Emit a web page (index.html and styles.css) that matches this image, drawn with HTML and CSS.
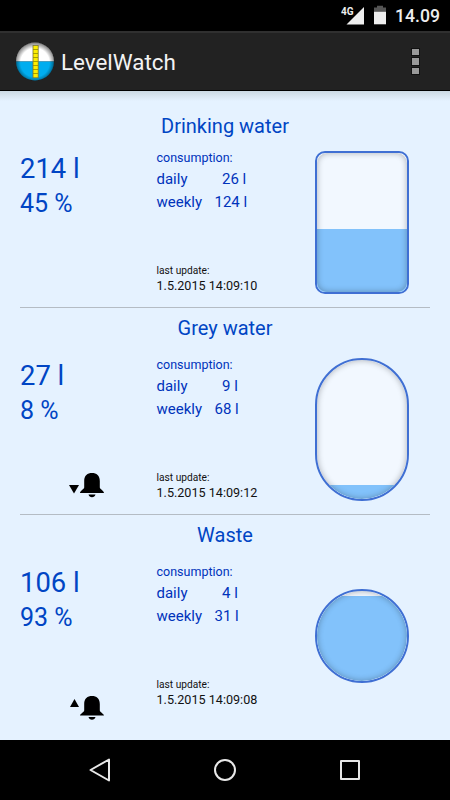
FILE: index.html
```
<!DOCTYPE html>
<html lang="en">
<head>
	<meta charset="UTF-8">
	<title>LevelWatch</title>
	<link rel="stylesheet" href="styles.css">
</head>
<body>
	<div id="statusbar">
		<svg class="signal" width="24" height="20" viewBox="0 0 24 20">
			<text x="0" y="10">4G</text>
			<path d="M23 2V19.500H5.500Z"/>
		</svg>
		<svg class="battery" width="12" height="20" viewBox="0 0 12 20">
			<path class="empty" d="M3 .8h6v1.600h3V7H0V2.400h3z"/>
			<path d="M0 6.800h12V19.300H0z"/>
		</svg>
		<span class="clock">14.09</span>
	</div>
	<div id="header">
		<svg class="logo" width="40" height="40" viewBox="0 0 40 40">
			<defs>
				<radialGradient id="shade" cx=".5" cy=".53" r=".52">
					<stop offset=".72" stop-color="#000" stop-opacity="0"/>
					<stop offset="1" stop-color="#000" stop-opacity=".5"/>
				</radialGradient>
			</defs>
			<path fill="#fff" d="M1 19.500a19 19 0 0 1 38 0z"/>
			<path fill="#00adef" d="M1 19.500a19 19 0 0 0 38 0z"/>
			<circle cx="20" cy="19.500" r="19.200" fill="url(#shade)"/>
			<rect x="18" y="3.400" width="5.200" height="32.400" fill="#fdee00" stroke="#77733a" stroke-width=".8"/>
			<path stroke="#918a00" stroke-width=".8" d="M18 7.500h5M18 11.500h5M18 15.500h5M18 19.500h5M18 23.500h5M18 27.500h5M18 31.500h5"/>
		</svg>
		<h1>LevelWatch</h1>
		<div class="menu">
			<i></i>
			<i></i>
			<i></i>
		</div>
	</div>
	<div id="content">
		<div class="section first">
			<h2>Drinking water</h2>
			<div class="row">
				<div class="level">
					<div class="litres">214 l</div>
					<div class="percent">45 %</div>
				</div>
				<div class="info">
					<div class="label">consumption:</div>
					<div class="daily"><span>daily</span>26 l</div>
					<div class="weekly"><span>weekly</span>124 l</div>
					<div class="update">last update:</div>
					<div class="date">1.5.2015 14:09:10</div>
				</div>
				<div class="tank">
					<div class="water" style="height: 45%"></div>
				</div>
			</div>
		</div>
		<div class="section">
			<h2>Grey water</h2>
			<div class="row">
				<div class="level">
					<div class="litres">27 l</div>
					<div class="percent">8 %</div>
					<svg class="alarm low" width="36" height="26" viewBox="0 0 36 26">
						<path d="M0 13h10L5 21.500z"/>
						<path d="M15.200 9C15.200 3.500 18.500 1 23 1s7.800 2.500 7.800 8v6.500c0 1.500 4.200 3.500 4.200 5.500H11c0-2 4.200-4 4.200-5.500zM19.500 22.500h7c-.5 1.800-1.800 2.700-3.500 2.700s-3-.9-3.500-2.700z"/>
					</svg>
				</div>
				<div class="info">
					<div class="label">consumption:</div>
					<div class="daily"><span>daily</span>9 l</div>
					<div class="weekly"><span>weekly</span>68 l</div>
					<div class="update">last update:</div>
					<div class="date">1.5.2015 14:09:12</div>
				</div>
				<div class="tank oval">
					<div class="water" style="height: 10%"></div>
				</div>
			</div>
		</div>
		<div class="section last">
			<h2>Waste</h2>
			<div class="row">
				<div class="level">
					<div class="litres">106 l</div>
					<div class="percent">93 %</div>
					<svg class="alarm high" width="36" height="26" viewBox="0 0 36 26">
						<path d="M1 12h9L5.500 4z"/>
						<path d="M15.200 9C15.200 3.500 18.500 1 23 1s7.800 2.500 7.800 8v6.500c0 1.500 4.200 3.500 4.200 5H11c0-1.500 4.200-3.500 4.200-5zM19.500 22h7c-.5 1.800-1.800 2.700-3.500 2.700s-3-.9-3.500-2.700z"/>
					</svg>
				</div>
				<div class="info">
					<div class="label">consumption:</div>
					<div class="daily"><span>daily</span>4 l</div>
					<div class="weekly"><span>weekly</span>31 l</div>
					<div class="update">last update:</div>
					<div class="date">1.5.2015 14:09:08</div>
				</div>
				<div class="tank round">
					<div class="water" style="height: 95%"></div>
				</div>
			</div>
		</div>
	</div>
	<div id="navbar">
		<svg width="24" height="24" viewBox="0 0 24 24"><path d="M21 1.500v21L2.500 12z"/></svg>
		<svg width="24" height="24" viewBox="0 0 24 24"><circle cx="12" cy="12" r="10"/></svg>
		<svg width="24" height="24" viewBox="0 0 24 24"><path d="M3 3h18v18H3z"/></svg>
	</div>
</body>
</html>
```
FILE: styles.css
```
*{
	margin: 0;
	padding: 0;
	box-sizing: border-box;
}
body{
	width: 450px;
	height: 800px;
	display: flex;
	flex-direction: column;
	overflow: hidden;
	font-family: Roboto, sans-serif;
	background: #e5f2ff;
}
h1, h2{
	font-weight: normal;
}
#statusbar{
	height: 31px;
	padding: 5px 10px 0 0;
	display: flex;
	justify-content: flex-end;
	background: #000;
	color: #eee;
}
#statusbar svg{
	fill: #eee;
}
.signal text{
	font-size: 10px;
	font-weight: bold;
}
.battery{
	margin-left: 9px;
}
#statusbar .empty{
	fill: #555;
}
.clock{
	margin-left: 9px;
	font-size: 17.600px;
	font-weight: 500;
	line-height: 23px;
}
#header{
	height: 60px;
	padding: 0 31px 0 15px;
	display: flex;
	align-items: center;
	background: #222;
	border-top: 2px solid #303030;
	border-bottom: 1px solid #000;
}
#header h1{
	margin-left: 6px;
	flex: 1;
	font-size: 22.400px;
	line-height: 30px;
	color: #f3f3f3;
}
.menu{
	display: grid;
	gap: 3px;
}
.menu i{
	width: 7px;
	height: 6.500px;
	background: #999;
	box-shadow: 0 0 0 1px #111;
}
#content{
	flex: 1;
	padding: 0 20px;
	background: linear-gradient(#cbd9e3, #e5f2ff 10px);
}
.section{
	height: 207px;
	padding-top: 8px;
	border-bottom: 1px solid #b4bcc4;
}
.section.first{
	height: 217px;
	padding-top: 23px;
}
.section.last{
	border: 0;
}
.section h2{
	margin-bottom: 16px;
	font-size: 20px;
	line-height: 24px;
	text-align: center;
	color: #0045c4;
}
.section.first h2{
	margin-bottom: 11px;
}
.row{
	display: grid;
	grid-template-columns: 136.500px 158.500px 94px;
	grid-template-rows: 146px;
}
.level{
	padding-top: 1px;
	color: #0045c4;
}
.litres{
	font-size: 27.400px;
	line-height: 38px;
}
.percent{
	font-size: 25px;
	line-height: 32px;
}
.alarm{
	display: block;
	margin-left: 49px;
}
.alarm.low{
	margin-top: 45px;
}
.alarm.high{
	margin-top: 61px;
}
.info{
	font-size: 15px;
	line-height: 23px;
	color: #0033bb;
}
.info .label{
	margin-bottom: 1px;
	font-size: 12.500px;
	line-height: 18px;
}
.info span{
	display: inline-block;
	width: 58px;
}
.info .daily span{
	width: 65.500px;
}
.info .update{
	margin-top: 50px;
	font-size: 10.200px;
	line-height: 14px;
	color: #111;
}
.info .date{
	margin-top: -1px;
	font-size: 12.600px;
	line-height: 18px;
	color: #111;
}
.tank{
	position: relative;
	width: 94px;
	height: 143px;
	align-self: center;
	display: flex;
	align-items: flex-end;
	overflow: hidden;
	border: 2px solid #3f6fd3;
	border-radius: 10px;
	background: #f2f8ff;
}
.tank.oval{
	border-radius: 47px;
}
.tank.round{
	height: 94px;
	border-radius: 50%;
}
.water{
	width: 100%;
	background: #82c2fb;
}
/* inner shadow over the water */
.tank:after{
	content: "";
	position: absolute;
	top: 0;
	left: 0;
	right: 0;
	bottom: 0;
	border-radius: inherit;
	box-shadow: inset 0 0 6px rgba(0, 0, 0, .3);
}
#navbar{
	height: 60px;
	padding: 0 88px;
	display: flex;
	justify-content: space-between;
	align-items: center;
	background: #000;
}
#navbar svg{
	fill: none;
	stroke: #e8e8e8;
	stroke-width: 2;
	stroke-linejoin: round;
}
```
